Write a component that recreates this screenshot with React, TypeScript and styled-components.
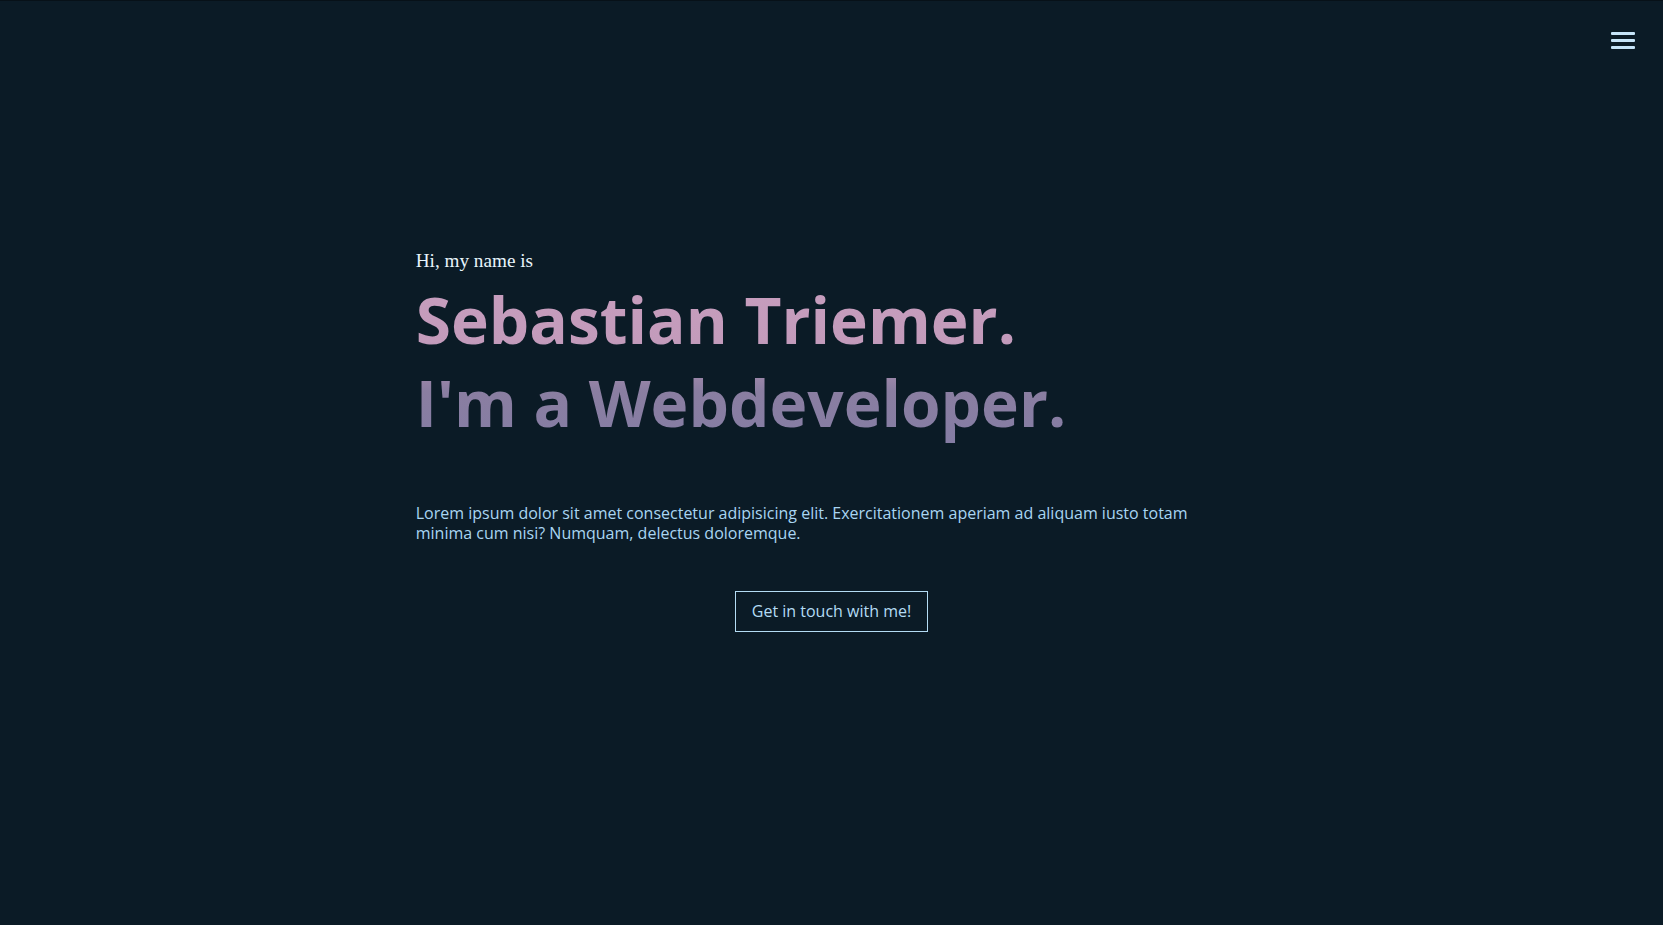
import React from "react";
import styled, { createGlobalStyle } from "styled-components";

const GlobalStyle = createGlobalStyle`
  html, body {
    margin: 0;
    padding: 0;
    background: #0b1b26;
  }
  * { box-sizing: border-box; }
`;

const Page = styled.div`
  min-height: 100vh;
  background: #0b1b26;
  border-top: 1px solid #071118;
  font-family: "Open Sans", "Noto Sans", sans-serif;
`;

const Header = styled.header`
  display: flex;
  justify-content: flex-end;
  padding: 31px 28px 0 0;
`;

const Burger = styled.button`
  display: flex;
  flex-direction: column;
  gap: 4px;
  width: 24px;
  padding: 0;
  border: none;
  background: transparent;
  cursor: pointer;
`;

const BurgerLine = styled.span`
  display: block;
  height: 3px;
  width: 100%;
  background: #c6e4f8;
  border-radius: 1px;
`;

const Hero = styled.main`
  width: 50%;
  margin: 0 auto;
  padding-top: 201px;
  display: flex;
  flex-direction: column;
`;

const Greeting = styled.p`
  margin: 0;
  font-family: "Liberation Serif", "Times New Roman", serif;
  font-size: 19.2px;
  color: #e8f5fc;
`;

const Title = styled.h1`
  margin: 6px 0 0;
  font-family: "Open Sans", sans-serif;
  font-weight: 700;
  font-size: 64px;
  line-height: 1.3;
  background: linear-gradient(180deg, #c79ebe 0%, #c39bbb 38%, #8a7ea1 68%, #857da4 100%);
  -webkit-background-clip: text;
  background-clip: text;
  color: transparent;
`;

const TitleLine = styled.span`
  display: block;
`;

const Intro = styled.p`
  margin: 59px 0 0;
  font-size: 16px;
  line-height: 20px;
  color: #a9d5f2;
`;

const Cta = styled.button`
  align-self: center;
  margin-top: 48px;
  padding: 8px 16px 9px;
  font-family: "Open Sans", sans-serif;
  font-size: 16px;
  line-height: 22px;
  color: #b4dcf4;
  background: transparent;
  border: 1px solid #b4dcf4;
  cursor: pointer;
`;

export default function App() {
  return (
    <>
      <GlobalStyle />
      <Page>
        <Header>
          <Burger aria-label="Menu">
            <BurgerLine />
            <BurgerLine />
            <BurgerLine />
          </Burger>
        </Header>
        <Hero>
          <Greeting>Hi, my name is</Greeting>
          <Title>
            <TitleLine>Sebastian Triemer.</TitleLine>
            <TitleLine>I'm a Webdeveloper.</TitleLine>
          </Title>
          <Intro>
            Lorem ipsum dolor sit amet consectetur adipisicing elit. Exercitationem aperiam ad aliquam iusto totam minima cum nisi? Numquam, delectus doloremque.
          </Intro>
          <Cta>Get in touch with me!</Cta>
        </Hero>
      </Page>
    </>
  );
}
